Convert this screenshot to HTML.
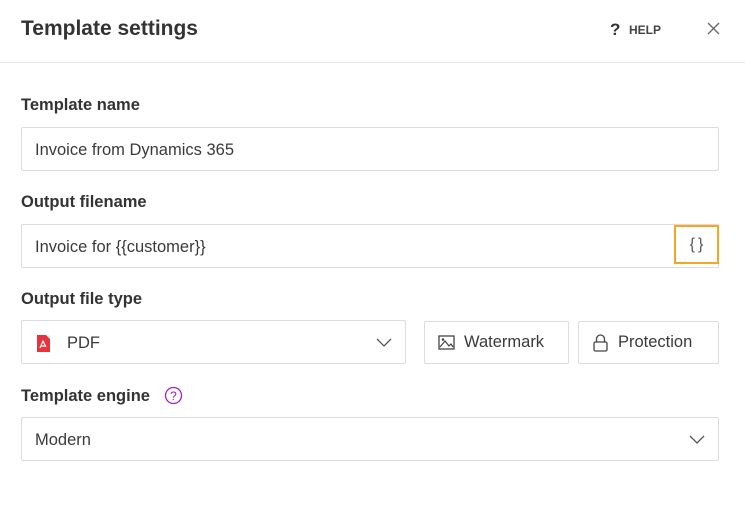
<!DOCTYPE html><html><head><style>
body{margin:0;width:745px;height:516px;background:#fff;font-family:"Liberation Sans",sans-serif;color:#333;position:relative;overflow:hidden}
.a{position:absolute}
.t{left:21px;top:17px;font-size:21px;font-weight:bold;color:#333}
.hr{left:0;top:62px;width:745px;height:1px;background:#e8e8e8}
.l{left:21px;font-size:16.5px;font-weight:bold;color:#333}
.in{border:1px solid #dcdcdc;border-radius:2px;box-sizing:border-box;font-size:16.5px;color:#3a3a3a;display:flex;align-items:center}
</style></head><body>
<div class="a t">Template settings</div>
<div class="a" style="left:610px;top:20px;font-size:17px;font-weight:bold;color:#333">?</div>
<div class="a" style="left:629px;top:23px;font-size:12px;font-weight:bold;color:#444">HELP</div>
<svg class="a" style="left:707px;top:22px" width="13" height="13" viewBox="0 0 13 13"><path d="M1 1L12 12M12 1L1 12" stroke="#666" stroke-width="1.3"/></svg>
<div class="a hr"></div>
<div class="a l" style="top:96px">Template name</div>
<div class="a in" style="left:21px;top:127px;width:698px;height:44px;padding-left:13px;padding-top:2px">Invoice from Dynamics 365</div>
<div class="a l" style="top:193px">Output filename</div>
<div class="a in" style="left:21px;top:224px;width:698px;height:44px;padding-left:13px;padding-top:2px">Invoice for {{customer}}</div>
<div class="a" style="left:674px;top:225px;width:45px;height:39px;box-sizing:border-box;border:2px solid #f5a623;display:flex;align-items:center;justify-content:center;font-size:16px;color:#555;letter-spacing:3px;padding-left:3px">{}</div>
<div class="a l" style="top:290px">Output file type</div>
<div class="a in" style="left:21px;top:320px;width:385px;height:44px;padding-left:15px;padding-top:2px">
<svg width="13" height="17" viewBox="0 0 13 17"><path d="M0 0H9L13 4V17H0Z" fill="#e8323c"/><path d="M3 13L6 6L9 12M4 11H9" stroke="#fff" stroke-width="1.2" fill="none"/></svg>
<span style="margin-left:17px">PDF</span></div>
<svg class="a" style="left:376px;top:338px" width="16" height="9" viewBox="0 0 16 9"><path d="M1 1L8 8L15 1" stroke="#555" stroke-width="1.3" fill="none"/></svg>
<div class="a in" style="left:424px;top:321px;width:145px;height:43px;padding-left:13px">
<svg width="17" height="15" viewBox="0 0 17 15"><rect x="1" y="1" width="15" height="13" fill="none" stroke="#444" stroke-width="1.3"/><path d="M2 12L7 6L11 11L13 9L15 12" stroke="#444" fill="none" stroke-width="1.2"/><circle cx="5" cy="4.5" r="1.3" fill="#444"/></svg>
<span style="margin-left:9px">Watermark</span></div>
<div class="a in" style="left:578px;top:321px;width:141px;height:43px;padding-left:14px">
<svg width="15" height="18" viewBox="0 0 15 18"><path d="M3.5 8V5a4 4 0 0 1 8 0v3" fill="none" stroke="#444" stroke-width="1.3"/><rect x="1" y="8" width="13" height="9" rx="1.5" fill="none" stroke="#444" stroke-width="1.3"/></svg>
<span style="margin-left:10px">Protection</span></div>
<div class="a l" style="top:387px">Template engine</div>
<svg class="a" style="left:164px;top:386px" width="19" height="19" viewBox="0 0 19 19"><circle cx="9.5" cy="9.5" r="8" fill="none" stroke="#a020c0" stroke-width="1.3"/><text x="9.5" y="14" font-size="12" text-anchor="middle" fill="#a020c0" font-family="Liberation Sans">?</text></svg>
<div class="a in" style="left:21px;top:417px;width:698px;height:44px;padding-left:13px;padding-top:2px">Modern</div>
<svg class="a" style="left:689px;top:435px" width="16" height="9" viewBox="0 0 16 9"><path d="M1 1L8 8L15 1" stroke="#555" stroke-width="1.3" fill="none"/></svg>
</body></html>
